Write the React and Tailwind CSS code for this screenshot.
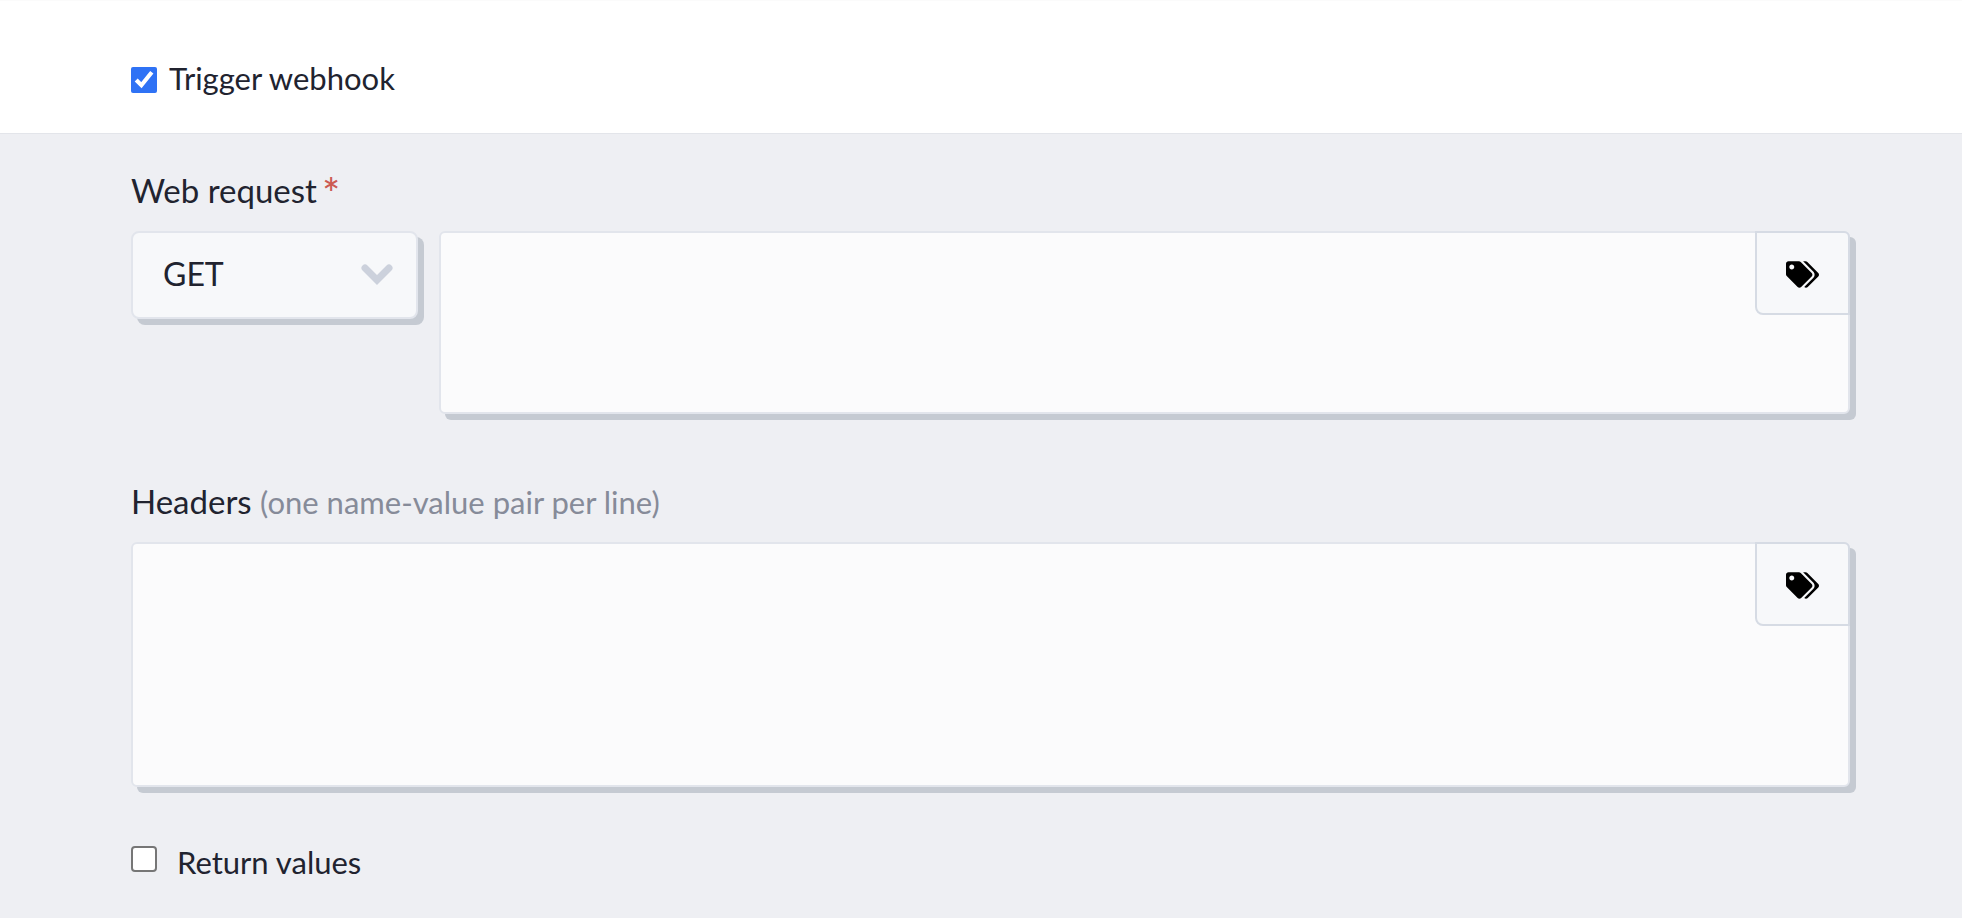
import { FaTags } from 'react-icons/fa'

const FONT = "font-['Lato','Noto_Sans',sans-serif]"

// Text area with the tag picker sitting in its top right corner
function TagArea({ className }) {
  return (
    <div className={'relative ' + className}>
      <textarea className="block h-full w-full resize-none rounded-[6px] border-2 border-[#e2e5ec] bg-[#fbfbfc] shadow-[6px_6px_0_#c5cad2] outline-none" />
      <button className="absolute right-0 top-0 flex h-[84px] w-[95px] items-center justify-center rounded-tr-[6px] rounded-bl-[8px] border-2 border-[#d6dbe4] bg-[#f7f8fa] pt-[3px] text-black">
        <FaTags size={33} />
      </button>
    </div>
  )
}

export default function App() {
  return (
    <div className={FONT + ' h-[918px] overflow-hidden bg-[#eeeff3] text-[33px] leading-[40px] text-[#21232f]'}>
      <div className="flex h-[134px] items-start gap-3 border-t border-b border-t-[#fbfbfb] border-b-[#e3e5ea] bg-white pl-[131px] pt-[57px] text-[31px]">
        <input type="checkbox" defaultChecked className="h-[26px] w-[26px] accent-[#2f72f5]" style={{ margin: '9px 0 0 0' }} />
        <span>Trigger webhook</span>
      </div>

      <div className="pl-[131px] pr-[112px]">
        <div className="h-[76px] pt-[36px]">
          Web request <span className="ml-[-3px] align-[-6px] text-[42px] leading-[20px] font-medium text-[#cc5a52]">*</span>
        </div>
        <div className="mt-[21px] flex items-start gap-[21px]">
          <div className="flex h-[88px] w-[287px] shrink-0 items-center justify-between rounded-[8px] border-2 border-[#e2e5ec] bg-[#f7f8fa] pl-[30px] pr-[23px] text-[32px] shadow-[6px_6px_0_#c5cad2]">
            <span className="mt-[-3px]">GET</span>
            <svg width="32" height="22" viewBox="0 0 32 22" fill="none" stroke="#ccd1dc" strokeWidth="7" strokeLinecap="round">
              <path d="M4 4 L16 16 L28 4" />
            </svg>
          </div>
          <TagArea className="h-[183px] flex-1" />
        </div>

        <div className="mt-[67px]">
          Headers <span className="text-[31px] text-[#868b99]">(one name-value pair per line)</span>
        </div>
        <TagArea className="mt-[20px] h-[245px]" />

        <div className="mt-[59px] flex items-start gap-[20px] text-[31px]">
          <input type="checkbox" className="h-[26px] w-[26px] appearance-none rounded-[4px] border-2 border-[#767676] bg-white" style={{ margin: 0 }} />
          <span className="mt-[-4px]">Return values</span>
        </div>
      </div>
    </div>
  )
}
